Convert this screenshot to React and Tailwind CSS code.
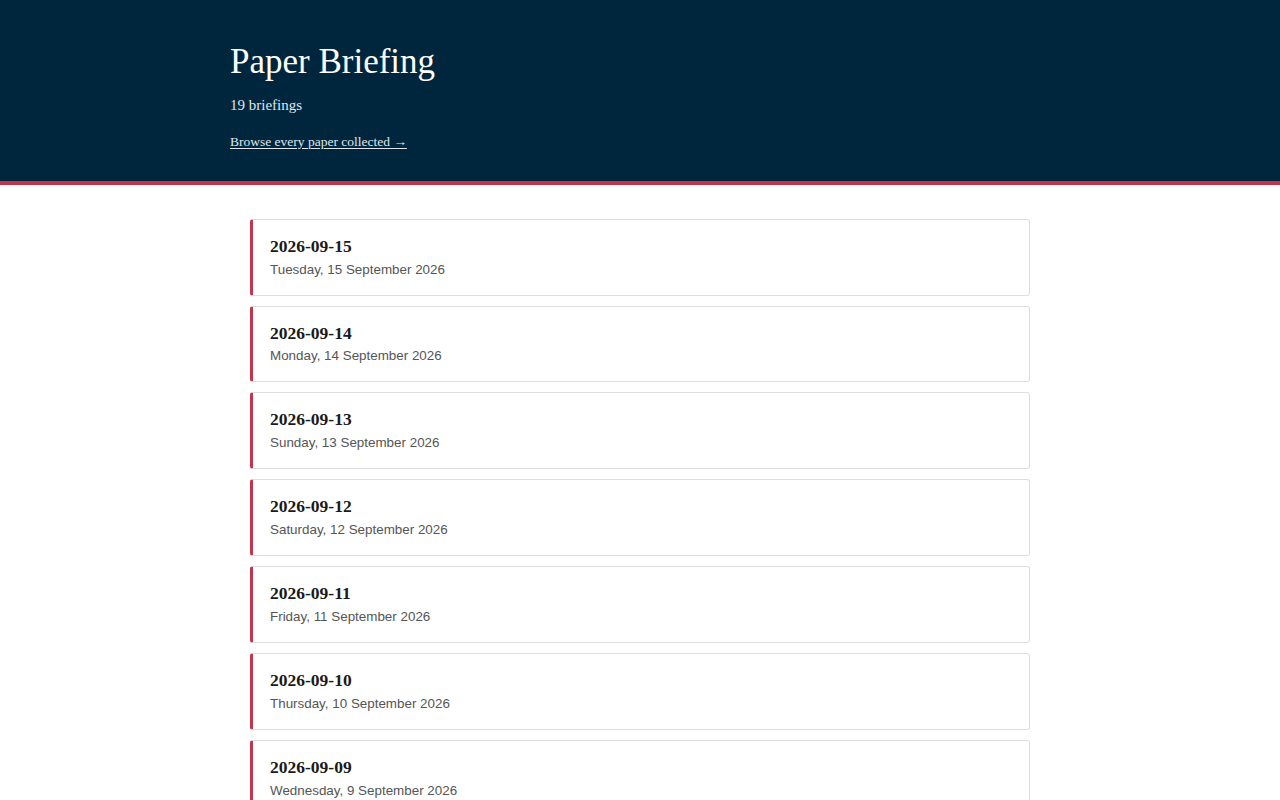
const briefings = [
  { date: '2026-09-15', label: 'Tuesday, 15 September 2026' },
  { date: '2026-09-14', label: 'Monday, 14 September 2026' },
  { date: '2026-09-13', label: 'Sunday, 13 September 2026' },
  { date: '2026-09-12', label: 'Saturday, 12 September 2026' },
  { date: '2026-09-11', label: 'Friday, 11 September 2026' },
  { date: '2026-09-10', label: 'Thursday, 10 September 2026' },
  { date: '2026-09-09', label: 'Wednesday, 9 September 2026' },
  { date: '2026-09-08', label: 'Tuesday, 8 September 2026' },
  { date: '2026-09-07', label: 'Monday, 7 September 2026' },
];

const serif = "font-['Liberation_Serif','DejaVu_Serif',serif]";
const sans = "font-['Liberation_Sans',Arial,sans-serif]";

export default function App() {
  return (
    <div className="min-h-screen bg-white">
      {/* Masthead */}
      <header className="bg-[#00263e] border-b-4 border-[#c3354a]">
        <div className="max-w-[820px] mx-auto pt-[38px] pb-[29px]">
          <h1 className={`${serif} text-[35px] leading-[48px] text-white`}>Paper Briefing</h1>
          <p className={`${serif} text-[15px] text-[#dfe6ec] mt-[8px]`}>19 briefings</p>
          <a href="#" className={`${serif} inline-block mt-[15px] text-[13.5px] text-[#dfe6ec] underline underline-offset-2`}>
            Browse every paper collected →
          </a>
        </div>
      </header>

      {/* Briefing list */}
      <main className="max-w-[780px] mx-auto pt-[34px] pb-10 flex flex-col gap-[10px]">
        {briefings.map((b) => (
          <a
            key={b.date}
            href="#"
            className="block bg-white border border-[#dedede] border-l-[3px] border-l-[#c3354a] rounded-[3px] pl-[17px] pr-4 py-[15px]"
          >
            <div className={`${serif} font-bold text-[17.5px] leading-[1.3] text-[#1a1a1a]`}>{b.date}</div>
            <div className={`${sans} text-[13.4px] leading-[1.5] mt-[2px] text-[#555]`}>{b.label}</div>
          </a>
        ))}
      </main>
    </div>
  );
}
